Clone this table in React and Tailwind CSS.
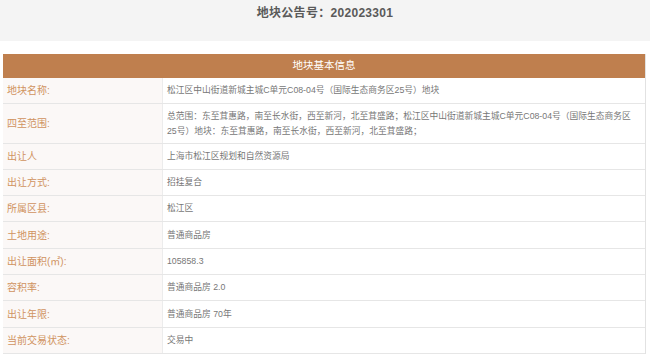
const rows = [
  { label: '地块名称:', value: '松江区中山街道新城主城C单元C08-04号（国际生态商务区25号）地块', h: 'h-[25px]' },
  {
    label: '四至范围:',
    value: '总范围：东至茸惠路，南至长水街，西至新河，北至茸盛路；松江区中山街道新城主城C单元C08-04号（国际生态商务区25号）地块：东至茸惠路，南至长水街，西至新河，北至茸盛路；',
    h: 'h-[39px]',
  },
  { label: '出让人', value: '上海市松江区规划和自然资源局', h: 'h-[25px]' },
  { label: '出让方式:', value: '招挂复合', h: 'h-[25px]' },
  { label: '所属区县:', value: '松江区', h: 'h-[25px]' },
  { label: '土地用途:', value: '普通商品房', h: 'h-[26px]' },
  { label: '出让面积(㎡):', value: '105858.3', h: 'h-[25px]' },
  { label: '容积率:', value: '普通商品房 2.0', h: 'h-[25px]' },
  { label: '出让年限:', value: '普通商品房 70年', h: 'h-[26px]' },
  { label: '当前交易状态:', value: '交易中', h: 'h-[25px]' },
];

export default function App() {
  return (
    <div
      className="w-[650px] h-[355px] overflow-hidden bg-white"
      style={{ fontFamily: '"Liberation Sans", "Noto Sans CJK SC", sans-serif' }}
    >
      {/* Notice number */}
      <div className="h-[41px] bg-[#f4f4f4] flex items-start justify-center pt-[4px]">
        <h1 className="text-[12px] font-bold text-[#5a5a5a] tracking-[0.3px]">地块公告号：202023301</h1>
      </div>

      {/* Basic info table */}
      <div className="mt-[13px] ml-[3px] mr-[4px] border-r border-[#e2e2e2]">
        <div className="h-[24px] bg-[#bf7f4e] flex items-center justify-center text-[10.5px] text-white">
          地块基本信息
        </div>
        {rows.map((row) => (
          <div key={row.label} className="flex border-b border-[#e6e6e6]">
            <div
              className={`w-[160px] shrink-0 bg-[#fbf8f7] border-r border-[#ececec] pl-[4px] flex items-center text-[10px] text-[#d0935f] ${row.h}`}
            >
              {row.label}
            </div>
            <div className="flex-1 pl-[4px] pr-[10px] flex items-center text-[8.75px] leading-[15px] text-[#777]">
              {row.value}
            </div>
          </div>
        ))}
      </div>
    </div>
  );
}
